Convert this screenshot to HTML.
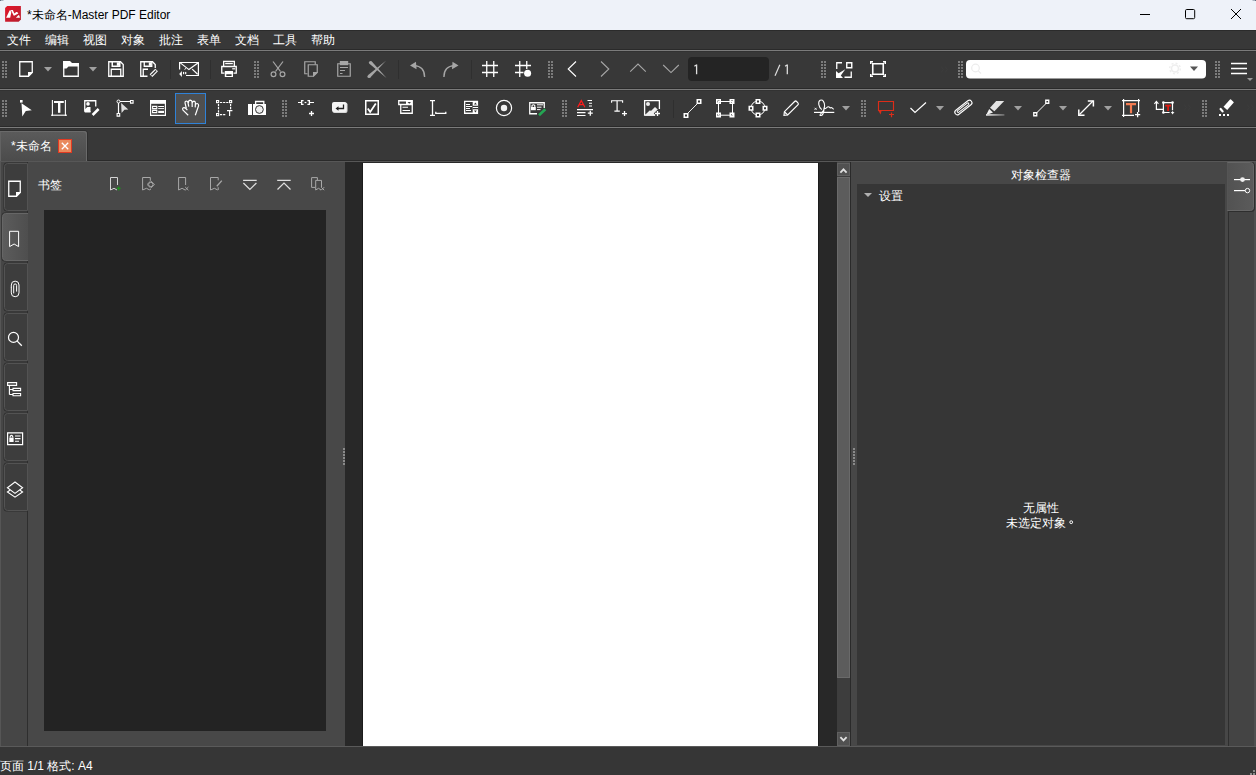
<!DOCTYPE html><html><head><meta charset="utf-8"><style>
html,body{margin:0;padding:0;width:1256px;height:775px;overflow:hidden;background:#363636;font-family:"Liberation Sans",sans-serif;}
</style></head><body><div style="position:absolute;left:0px;top:0px;width:1256px;height:30px;background:#eef2f9"></div><div style="position:absolute;left:0px;top:30px;width:1256px;height:1px;background:#2b2b2b"></div><div style="position:absolute;left:0px;top:31px;width:1256px;height:18px;background:#383838"></div><div style="position:absolute;left:0px;top:49px;width:1256px;height:1px;background:#2a2a2a"></div><div style="position:absolute;left:0px;top:50px;width:1256px;height:1px;background:#7b7b7b"></div><div style="position:absolute;left:0px;top:51px;width:1256px;height:1px;background:#323232"></div><div style="position:absolute;left:0px;top:88px;width:1256px;height:1px;background:#2a2a2a"></div><div style="position:absolute;left:0px;top:89px;width:1256px;height:1px;background:#7b7b7b"></div><div style="position:absolute;left:0px;top:90px;width:1256px;height:1px;background:#323232"></div><div style="position:absolute;left:0px;top:126px;width:1256px;height:1px;background:#2a2a2a"></div><div style="position:absolute;left:0px;top:127px;width:1256px;height:1px;background:#7b7b7b"></div><div style="position:absolute;left:0px;top:128px;width:1256px;height:1px;background:#323232"></div><div style="position:absolute;left:0px;top:52px;width:1256px;height:36px;background:#383838"></div><div style="position:absolute;left:0px;top:91px;width:1256px;height:35px;background:#383838"></div><div style="position:absolute;left:0px;top:129px;width:1256px;height:31px;background:#383838"></div><div style="position:absolute;left:0px;top:130px;width:88px;height:31px;background:#2e2e2e;border-radius:0 4px 0 0"></div><div style="position:absolute;left:0px;top:131px;width:87px;height:31px;background:linear-gradient(#5b5b5b,#4b4b4b);border-radius:0 3px 0 0;box-shadow:inset -1px 1px 0 #6a6a6a, inset 1px 0 0 #626262"></div><div style="position:absolute;left:88px;top:160px;width:1168px;height:1px;background:#2a2a2a"></div><div style="position:absolute;left:0px;top:161px;width:1256px;height:586px;background:#474747"></div><div style="position:absolute;left:0px;top:161px;width:27px;height:585px;background:#464646"></div><div style="position:absolute;left:0px;top:161px;width:1px;height:585px;background:#565656"></div><div style="position:absolute;left:27px;top:161px;width:1px;height:585px;background:#2e2e2e"></div><div style="position:absolute;left:28px;top:161px;width:317px;height:585px;background:#484848"></div><div style="position:absolute;left:44px;top:210px;width:282px;height:521px;background:#232323"></div><div style="position:absolute;left:345px;top:161px;width:492px;height:586px;background:#282828"></div><div style="position:absolute;left:362px;top:163px;width:1px;height:583px;background:#1c1c1c"></div><div style="position:absolute;left:363px;top:163px;width:455px;height:583px;background:#ffffff"></div><div style="position:absolute;left:818px;top:163px;width:1px;height:583px;background:#1c1c1c"></div><div style="position:absolute;left:837px;top:163px;width:13px;height:583px;background:#3d3d3d"></div><div style="position:absolute;left:850px;top:161px;width:1px;height:586px;background:#2a2a2a"></div><div style="position:absolute;left:851px;top:161px;width:377px;height:585px;background:#474747"></div><div style="position:absolute;left:857px;top:184px;width:368px;height:561px;background:#363636"></div><div style="position:absolute;left:1228px;top:161px;width:1px;height:585px;background:#2e2e2e"></div><div style="position:absolute;left:1229px;top:161px;width:27px;height:585px;background:#444444"></div><div style="position:absolute;left:1254px;top:161px;width:2px;height:585px;background:#4f4f4f"></div><div style="position:absolute;left:0px;top:161px;width:1256px;height:1px;background:#575757"></div><div style="position:absolute;left:0px;top:746px;width:1256px;height:1px;background:#5a5a5a"></div><div style="position:absolute;left:0px;top:747px;width:1256px;height:28px;background:#363636"></div><div style="position:absolute;left:27px;top:7px;font-size:12px;line-height:16px;color:#000;white-space:nowrap;">*未命名-Master PDF Editor</div><div style="position:absolute;left:7px;top:32px;font-size:12px;line-height:16px;color:#fff;white-space:nowrap;">文件</div><div style="position:absolute;left:45px;top:32px;font-size:12px;line-height:16px;color:#fff;white-space:nowrap;">编辑</div><div style="position:absolute;left:83px;top:32px;font-size:12px;line-height:16px;color:#fff;white-space:nowrap;">视图</div><div style="position:absolute;left:121px;top:32px;font-size:12px;line-height:16px;color:#fff;white-space:nowrap;">对象</div><div style="position:absolute;left:159px;top:32px;font-size:12px;line-height:16px;color:#fff;white-space:nowrap;">批注</div><div style="position:absolute;left:197px;top:32px;font-size:12px;line-height:16px;color:#fff;white-space:nowrap;">表单</div><div style="position:absolute;left:235px;top:32px;font-size:12px;line-height:16px;color:#fff;white-space:nowrap;">文档</div><div style="position:absolute;left:273px;top:32px;font-size:12px;line-height:16px;color:#fff;white-space:nowrap;">工具</div><div style="position:absolute;left:311px;top:32px;font-size:12px;line-height:16px;color:#fff;white-space:nowrap;">帮助</div><div style="position:absolute;left:11px;top:138px;font-size:12px;line-height:16px;color:#fff;white-space:nowrap;">*未命名</div><div style="position:absolute;left:38px;top:177px;font-size:12px;line-height:16px;color:#fff;white-space:nowrap;">书签</div><div style="position:absolute;left:1011px;top:167px;font-size:12px;line-height:16px;color:#fff;white-space:nowrap;">对象检查器</div><div style="position:absolute;left:879px;top:188px;font-size:12px;line-height:16px;color:#fff;white-space:nowrap;">设置</div><div style="position:absolute;left:1023px;top:500px;font-size:12px;line-height:16px;color:#fff;white-space:nowrap;">无属性</div><div style="position:absolute;left:1006px;top:515px;font-size:12px;line-height:16px;color:#fff;white-space:nowrap;">未选定对象</div><div style="position:absolute;left:0px;top:758px;font-size:12px;line-height:16px;color:#fff;white-space:nowrap;">页面 1/1 格式: A4</div><div style="position:absolute;left:688px;top:57px;width:81px;height:24px;background:#242424;border-radius:4px"></div><svg style="position:absolute;left:0;top:0" width="1256" height="775" viewBox="0 0 1256 775"><rect x="2" y="61" width="2" height="2" fill="#7c7c7c"/><rect x="5" y="61" width="2" height="2" fill="#7c7c7c"/><rect x="2" y="64" width="2" height="2" fill="#7c7c7c"/><rect x="5" y="64" width="2" height="2" fill="#7c7c7c"/><rect x="2" y="67" width="2" height="2" fill="#7c7c7c"/><rect x="5" y="67" width="2" height="2" fill="#7c7c7c"/><rect x="2" y="70" width="2" height="2" fill="#7c7c7c"/><rect x="5" y="70" width="2" height="2" fill="#7c7c7c"/><rect x="2" y="73" width="2" height="2" fill="#7c7c7c"/><rect x="5" y="73" width="2" height="2" fill="#7c7c7c"/><rect x="2" y="76" width="2" height="2" fill="#7c7c7c"/><rect x="5" y="76" width="2" height="2" fill="#7c7c7c"/><path d="M19.75,61.75 H32.25 V72.5 L28.5,76.25 H19.75 Z" stroke="#ffffff" stroke-width="1.3" fill="none" /><path d="M28,77 L28,72 L33,72 Z" fill="#ffffff"/><polygon points="44,67 52,67 48,71.5" fill="#a0a0a0"/><path d="M63.75,65.5 V76.25 H78.25 V65.5" stroke="#ffffff" stroke-width="1.3" fill="none" /><path d="M63,61 H70 L72,63 H79 V66.5 H68.5 L66.5,68.5 H63 Z" fill="#ffffff"/><polygon points="89,67 97,67 93,71.5" fill="#a0a0a0"/><path d="M108.75,61.75 H120.5 L123.25,64.5 V76.25 H108.75 Z" stroke="#ffffff" stroke-width="1.3" fill="none" /><path d="M112.25,61.75 V66.25 H119.75 V61.75" stroke="#ffffff" stroke-width="1.5" fill="none" /><rect x="116.8" y="62.3" width="2.2" height="3.5" fill="#ffffff"/><path d="M111.25,76.25 V69.25 H120.75 V76.25" stroke="#ffffff" stroke-width="1.3" fill="none" /><path d="M147.5,76.25 H140.75 V61.75 H152.5 L155.25,64.5 V68" stroke="#ffffff" stroke-width="1.3" fill="none" /><path d="M144.25,61.75 V66.25 H151.75 V61.75" stroke="#ffffff" stroke-width="1.3" fill="none" /><rect x="148.8" y="62.3" width="2.2" height="3.5" fill="#ffffff"/><path d="M143.25,76 V69.25 H148" stroke="#ffffff" stroke-width="1.3" fill="none" /><path d="M151,75.6 L156.6,70" stroke="#ffffff" stroke-width="3.8" fill="none" /><path d="M151.4,75.2 L156.2,70.4" stroke="#383838" stroke-width="1.4" fill="none" /><rect x="170" y="60" width="1" height="19" fill="#2f2f2f"/><path d="M179.6,69.6 V62.5 H198.4 V75.5 H186" stroke="#ffffff" stroke-width="1.2" fill="none" /><path d="M180.3,62.9 L188.9,69.6 L197.9,62.9" stroke="#ffffff" stroke-width="1.2" fill="none" /><path d="M184.5,69.4 L186,68.4" stroke="#ffffff" stroke-width="1.0" fill="none" /><path d="M192.2,69.1 L197.6,74.2" stroke="#ffffff" stroke-width="1.2" fill="none" /><path d="M179.2,73.9 L181.9,71.1 V76.9 Z" fill="#ffffff"/><rect x="183" y="71.9" width="1.2" height="2.3" fill="#ffffff"/><rect x="185.1" y="71.9" width="1.2" height="2.3" fill="#ffffff"/><rect x="210" y="60" width="1" height="19" fill="#2f2f2f"/><path d="M223.65,66 V61.45 H234.35 V66" stroke="#ffffff" stroke-width="1.3" fill="none" /><rect x="225.2" y="62.8" width="7.6" height="1.4" fill="#ffffff"/><path d="M224.5,73.2 H221.75 V66.5 H236.25 V73.2 H233.5" stroke="#ffffff" stroke-width="1.3" fill="none" /><rect x="232.2" y="68.2" width="3" height="1.2" fill="#ffffff"/><path d="M224.8,70.9 H233 V76.9 H224.8 Z M226.3,74.3 V75.9 H231.6 V74.3 Z" fill="#ffffff"/><rect x="254" y="61" width="2" height="2" fill="#7c7c7c"/><rect x="257" y="61" width="2" height="2" fill="#7c7c7c"/><rect x="254" y="64" width="2" height="2" fill="#7c7c7c"/><rect x="257" y="64" width="2" height="2" fill="#7c7c7c"/><rect x="254" y="67" width="2" height="2" fill="#7c7c7c"/><rect x="257" y="67" width="2" height="2" fill="#7c7c7c"/><rect x="254" y="70" width="2" height="2" fill="#7c7c7c"/><rect x="257" y="70" width="2" height="2" fill="#7c7c7c"/><rect x="254" y="73" width="2" height="2" fill="#7c7c7c"/><rect x="257" y="73" width="2" height="2" fill="#7c7c7c"/><rect x="254" y="76" width="2" height="2" fill="#7c7c7c"/><rect x="257" y="76" width="2" height="2" fill="#7c7c7c"/><path d="M273,61.5 L280.5,71.5" stroke="#a6a6a6" stroke-width="1.2" fill="none" /><path d="M283,61.5 L275.5,71.5" stroke="#a6a6a6" stroke-width="1.2" fill="none" /><circle cx="273.5" cy="74.3" r="2.4" stroke="#a6a6a6" stroke-width="1.2" fill="none"/><circle cx="282.5" cy="74.3" r="2.4" stroke="#a6a6a6" stroke-width="1.2" fill="none"/><path d="M307.5,73.75 H304.75 V61.75 H315.25 V64.5" stroke="#a6a6a6" stroke-width="1.2" fill="none" /><path d="M308.25,64.75 H317.25 V72.5 L313.5,76.25 H308.25 Z" stroke="#a6a6a6" stroke-width="1.2" fill="none" /><path d="M313,77 V72 H318 Z" fill="#a6a6a6"/><path d="M340,63.75 H337.75 V76.25 H350.25 V63.75 H348" stroke="#a6a6a6" stroke-width="1.2" fill="none" /><rect x="339.8" y="61" width="8.4" height="4.2" fill="#a6a6a6"/><path d="M340,67.5 H348 M340,70.5 H345 M340,73.5 H342.5" stroke="#a6a6a6" stroke-width="1.2" fill="none" /><path d="M367.9,75.3 L385.9,60.7 L370.1,77.7 Z" fill="#a6a6a6"/><circle cx="369" cy="76.5" r="1.6" fill="#a6a6a6"/><path d="M369.4,63.65 L386.5,77.9 L371.6,61.35 Z" fill="#a6a6a6"/><circle cx="370.5" cy="62.5" r="1.6" fill="#a6a6a6"/><rect x="398" y="60" width="1" height="19" fill="#2f2f2f"/><path d="M410,65.5 L416,61.8 L416.5,69.2 Z" fill="#a6a6a6"/><path d="M414,65.6 Q424.6,66 424.6,77" stroke="#a6a6a6" stroke-width="1.4" fill="none" /><path d="M458.5,65.5 L452.5,61.8 L452,69.2 Z" fill="#a6a6a6"/><path d="M454.5,65.6 Q443.9,66 443.9,77" stroke="#a6a6a6" stroke-width="1.4" fill="none" /><rect x="471" y="60" width="1" height="19" fill="#2f2f2f"/><path d="M486.75,61 V77 M493.75,61 V77 M482,65.5 H498 M482,72.5 H498" stroke="#ffffff" stroke-width="1.3" fill="none" /><path d="M519.75,61 V77 M515,65.5 H531 M515,72.5 H523.5 M526.75,61 V69" stroke="#ffffff" stroke-width="1.3" fill="none" /><circle cx="527.6" cy="73.3" r="3.5" fill="#ffffff"/><rect x="548" y="61" width="2" height="2" fill="#7c7c7c"/><rect x="551" y="61" width="2" height="2" fill="#7c7c7c"/><rect x="548" y="64" width="2" height="2" fill="#7c7c7c"/><rect x="551" y="64" width="2" height="2" fill="#7c7c7c"/><rect x="548" y="67" width="2" height="2" fill="#7c7c7c"/><rect x="551" y="67" width="2" height="2" fill="#7c7c7c"/><rect x="548" y="70" width="2" height="2" fill="#7c7c7c"/><rect x="551" y="70" width="2" height="2" fill="#7c7c7c"/><rect x="548" y="73" width="2" height="2" fill="#7c7c7c"/><rect x="551" y="73" width="2" height="2" fill="#7c7c7c"/><rect x="548" y="76" width="2" height="2" fill="#7c7c7c"/><rect x="551" y="76" width="2" height="2" fill="#7c7c7c"/><path d="M576,61.5 L568.2,69 L576,76.5" stroke="#ffffff" stroke-width="1.1" fill="none" /><path d="M601,61.5 L608.8,69 L601,76.5" stroke="#a6a6a6" stroke-width="1.1" fill="none" /><path d="M630.2,71.6 L638,64 L645.8,71.6" stroke="#a6a6a6" stroke-width="1.1" fill="none" /><path d="M663.2,65 L671,72.6 L678.8,65" stroke="#a6a6a6" stroke-width="1.1" fill="none" /><rect x="821" y="61" width="2" height="2" fill="#7c7c7c"/><rect x="824" y="61" width="2" height="2" fill="#7c7c7c"/><rect x="821" y="64" width="2" height="2" fill="#7c7c7c"/><rect x="824" y="64" width="2" height="2" fill="#7c7c7c"/><rect x="821" y="67" width="2" height="2" fill="#7c7c7c"/><rect x="824" y="67" width="2" height="2" fill="#7c7c7c"/><rect x="821" y="70" width="2" height="2" fill="#7c7c7c"/><rect x="824" y="70" width="2" height="2" fill="#7c7c7c"/><rect x="821" y="73" width="2" height="2" fill="#7c7c7c"/><rect x="824" y="73" width="2" height="2" fill="#7c7c7c"/><rect x="821" y="76" width="2" height="2" fill="#7c7c7c"/><rect x="824" y="76" width="2" height="2" fill="#7c7c7c"/><path d="M836.75,69 V62.75 H842" stroke="#ffffff" stroke-width="1.3" fill="none" /><path d="M846.75,62.75 H851.75 V67.75 H846.75 Z" stroke="#ffffff" stroke-width="1.4" fill="none" /><path d="M844.5,77.25 H851.25 V71.5" stroke="#ffffff" stroke-width="1.3" fill="none" /><path d="M836,71 V78 H843 L840.8,75.6 L845.3,69.3 L838.6,73.3 Z" fill="#ffffff"/><path d="M872.75,63.75 H883.25 V74.25 H872.75 Z" stroke="#ffffff" stroke-width="1.6" fill="none" /><path d="M870.75,64 V61.75 H873 M883,61.75 H885.25 V64 M885.25,74 V76.25 H883 M873,76.25 H870.75 V74" stroke="#ffffff" stroke-width="1.5" fill="none" /><path d="M941,66.5 L943.5,69.5 L941,72.5 M945,66.5 L947.5,69.5 L945,72.5" stroke="#3c3c3c" stroke-width="1" fill="none" /><rect x="958" y="61" width="2" height="2" fill="#7c7c7c"/><rect x="961" y="61" width="2" height="2" fill="#7c7c7c"/><rect x="958" y="64" width="2" height="2" fill="#7c7c7c"/><rect x="961" y="64" width="2" height="2" fill="#7c7c7c"/><rect x="958" y="67" width="2" height="2" fill="#7c7c7c"/><rect x="961" y="67" width="2" height="2" fill="#7c7c7c"/><rect x="958" y="70" width="2" height="2" fill="#7c7c7c"/><rect x="961" y="70" width="2" height="2" fill="#7c7c7c"/><rect x="958" y="73" width="2" height="2" fill="#7c7c7c"/><rect x="961" y="73" width="2" height="2" fill="#7c7c7c"/><rect x="958" y="76" width="2" height="2" fill="#7c7c7c"/><rect x="961" y="76" width="2" height="2" fill="#7c7c7c"/><rect x="966" y="60" width="240" height="18.4" rx="4" fill="#ffffff"/><circle cx="975.5" cy="68" r="3.8" stroke="#ececec" stroke-width="1.2" fill="none"/><path d="M978.3,70.8 L981,73.5" stroke="#ececec" stroke-width="1.2" fill="none" /><circle cx="1175" cy="68.5" r="3.5" stroke="#eeeeee" stroke-width="1.6" fill="none"/><circle cx="1175" cy="68.5" r="5.3" stroke="#eeeeee" stroke-width="1.4" stroke-dasharray="2 2.15" fill="none"/><polygon points="1190,66.5 1198,66.5 1194,71.0" fill="#555555"/><rect x="1215" y="61" width="2" height="2" fill="#7c7c7c"/><rect x="1218" y="61" width="2" height="2" fill="#7c7c7c"/><rect x="1215" y="64" width="2" height="2" fill="#7c7c7c"/><rect x="1218" y="64" width="2" height="2" fill="#7c7c7c"/><rect x="1215" y="67" width="2" height="2" fill="#7c7c7c"/><rect x="1218" y="67" width="2" height="2" fill="#7c7c7c"/><rect x="1215" y="70" width="2" height="2" fill="#7c7c7c"/><rect x="1218" y="70" width="2" height="2" fill="#7c7c7c"/><rect x="1215" y="73" width="2" height="2" fill="#7c7c7c"/><rect x="1218" y="73" width="2" height="2" fill="#7c7c7c"/><rect x="1215" y="76" width="2" height="2" fill="#7c7c7c"/><rect x="1218" y="76" width="2" height="2" fill="#7c7c7c"/><path d="M1231,63.5 H1247 M1231,68.5 H1247 M1231,73.5 H1247" stroke="#ffffff" stroke-width="1.3" fill="none" /><polygon points="1247,78 1253,78 1250,81" fill="#9a9a9a"/><rect x="2" y="100" width="2" height="2" fill="#7c7c7c"/><rect x="5" y="100" width="2" height="2" fill="#7c7c7c"/><rect x="2" y="103" width="2" height="2" fill="#7c7c7c"/><rect x="5" y="103" width="2" height="2" fill="#7c7c7c"/><rect x="2" y="106" width="2" height="2" fill="#7c7c7c"/><rect x="5" y="106" width="2" height="2" fill="#7c7c7c"/><rect x="2" y="109" width="2" height="2" fill="#7c7c7c"/><rect x="5" y="109" width="2" height="2" fill="#7c7c7c"/><rect x="2" y="112" width="2" height="2" fill="#7c7c7c"/><rect x="5" y="112" width="2" height="2" fill="#7c7c7c"/><rect x="2" y="115" width="2" height="2" fill="#7c7c7c"/><rect x="5" y="115" width="2" height="2" fill="#7c7c7c"/><rect x="20" y="100" width="2.6" height="2.6" fill="#ffffff"/><path d="M21.5,103.2 L31.8,110.3 L25.8,111 L22.3,116.6 Z" fill="#ffffff"/><path d="M52.4,100 V116 M65.4,100 V116" stroke="#ffffff" stroke-width="1.1" fill="none" /><path d="M51,115.2 H67" stroke="#ffffff" stroke-width="1.1" fill="none" /><rect x="54" y="101" width="9.8" height="2" fill="#ffffff"/><rect x="58" y="103" width="2.4" height="9.8" fill="#ffffff"/><path d="M84.75,111.75 V100.75 H95.75 V106.5" stroke="#ffffff" stroke-width="1.3" fill="none" /><path d="M84.75,111.75 H90.5" stroke="#ffffff" stroke-width="1.5" fill="none" /><circle cx="88" cy="103.9" r="1.8" fill="#fff"/><path d="M85,112 V109.2 L87.3,107 H90.5 V112 Z" fill="#ffffff"/><path d="M92.6,115 L98.6,109" stroke="#ffffff" stroke-width="2.6" fill="none" /><path d="M118.5,103 V113.5 M120,101.5 H130.3" stroke="#ffffff" stroke-width="1.2" fill="none" /><circle cx="118.5" cy="101.5" r="1.5" stroke="#fff" stroke-width="1" fill="#383838"/><path d="M130.5,100.5 h2.6 v2.6 h-2.6 Z" stroke="#ffffff" stroke-width="1.1" fill="#383838" /><path d="M117.1,113.5 h2.6 v2.6 h-2.6 Z" stroke="#ffffff" stroke-width="1.1" fill="#383838" /><path d="M121.1,103.1 L128.3,109.4 L124.4,109.8 L121.6,113 Z" fill="#e0e0e0"/><path d="M150.6,100.6 H165.4 V115.4 H150.6 Z" stroke="#ffffff" stroke-width="1.2" fill="none" /><rect x="150" y="100" width="16" height="3.8" fill="#ffffff"/><path d="M152.6,106.4 h4.2 v2.2 h-4.2 Z M152.6,110.4 h4.2 v2.2 h-4.2 Z" stroke="#ffffff" stroke-width="1.1" fill="none" /><path d="M158.2,106.5 H164 M158.2,108.6 H164" stroke="#ffffff" stroke-width="1.0" fill="none" /><rect x="158.2" y="110.8" width="5.8" height="2.2" fill="#ffffff"/><rect x="175.5" y="93.5" width="30" height="30" fill="#4f4f4f" stroke="#2f82d8" stroke-width="1"/><path d="M188.2,115.2 L183,110.2 Q182,108.8 183.2,107.8 Q184.4,107.2 185.6,108.4 L187.4,110.2 M186.4,108.6 L185,103 Q184.8,101.2 186.3,101 Q187.6,101 188,102.6 L188.8,106.6 M188.3,103 Q188.5,100.2 190.4,100.2 Q192,100.3 192.1,102.4 L192.2,107 M192.2,103.2 Q192.6,101.2 194,101.2 Q195.4,101.4 195.4,103 L195.2,107.4 M195.4,105 Q195.8,103.4 197.2,103.5 Q198.8,103.8 198.6,105.6 L195.3,115.2" stroke="#ffffff" stroke-width="1.2" fill="none" /><rect x="216" y="100" width="3.2" height="3.2" fill="#ffffff"/><rect x="217.1" y="101.1" width="1" height="1" fill="#383838"/><rect x="229" y="100" width="3.2" height="3.2" fill="#ffffff"/><rect x="230.1" y="101.1" width="1" height="1" fill="#383838"/><rect x="216" y="113" width="3.2" height="3.2" fill="#ffffff"/><rect x="217.1" y="114.1" width="1" height="1" fill="#383838"/><path d="M220,102.5 H228.6 M218.5,104 V112.4 M230.6,104 V109.2 M220,114.6 H225.4" stroke="#ffffff" stroke-width="1.2" fill="none" stroke-dasharray="2.2 0.9"/><path d="M227,110.6 H232.4 M229.6,110.6 V116" stroke="#ffffff" stroke-width="1.2" fill="none" /><rect x="248" y="104" width="4" height="11" fill="#ffffff"/><path d="M253,104 H266 V115 H253 Z" fill="#ffffff"/><circle cx="259.4" cy="109.5" r="3.9" stroke="#333" stroke-width="1" fill="#eeeeee"/><path d="M255.6,104 V101.5 H263.8 V104" stroke="#ffffff" stroke-width="1.3" fill="none" /><rect x="282" y="100" width="2" height="2" fill="#7c7c7c"/><rect x="285" y="100" width="2" height="2" fill="#7c7c7c"/><rect x="282" y="103" width="2" height="2" fill="#7c7c7c"/><rect x="285" y="103" width="2" height="2" fill="#7c7c7c"/><rect x="282" y="106" width="2" height="2" fill="#7c7c7c"/><rect x="285" y="106" width="2" height="2" fill="#7c7c7c"/><rect x="282" y="109" width="2" height="2" fill="#7c7c7c"/><rect x="285" y="109" width="2" height="2" fill="#7c7c7c"/><rect x="282" y="112" width="2" height="2" fill="#7c7c7c"/><rect x="285" y="112" width="2" height="2" fill="#7c7c7c"/><rect x="282" y="115" width="2" height="2" fill="#7c7c7c"/><rect x="285" y="115" width="2" height="2" fill="#7c7c7c"/><path d="M298,102.5 H301.2 M309.6,102.5 H314" stroke="#ffffff" stroke-width="1.2" fill="none" /><path d="M303.6,100.7 H301.6 V104.3 H303.6 M307.4,100.7 H309.4 V104.3 H307.4" stroke="#ffffff" stroke-width="1.3" fill="none" /><path d="M304.6,102.5 H306.4" stroke="#ffffff" stroke-width="1.2" fill="none" /><path d="M309.0,113.5 H314.0 M311.5,111.0 V116.0" stroke="#ffffff" stroke-width="1.3" fill="none" /><rect x="332.5" y="102.5" width="15" height="10.5" rx="2" fill="#d9d9d9"/><rect x="332" y="102" width="14.5" height="10" rx="2" fill="#f4f4f4"/><path d="M343.5,104.5 V108.5 H337.8" stroke="#222" stroke-width="1.3" fill="none" /><path d="M335.5,108.5 L338.5,106.3 V110.7 Z" fill="#222"/><path d="M365.75,100.75 H378.25 V114.25 H365.75 Z" stroke="#ffffff" stroke-width="1.5" fill="none" /><path d="M367.8,108.4 L370.2,112 L375.8,103.6" stroke="#ffffff" stroke-width="1.8" fill="none" /><path d="M398.75,100.75 H412.25 V104.5 H398.75 Z" stroke="#ffffff" stroke-width="1.3" fill="none" /><rect x="406" y="101" width="6.3" height="3.5" fill="#ffffff"/><path d="M407.5,102 H411 L409.25,103.8 Z" fill="#383838"/><path d="M400.75,104.5 V113.25 H412.25 V104.5" stroke="#ffffff" stroke-width="1.3" fill="none" /><path d="M402.5,107.2 H408 M402.5,110.5 H410" stroke="#ffffff" stroke-width="1.1" fill="none" /><path d="M432.5,100.5 V115.5 M430,100.6 H435 M430,115.4 H435" stroke="#ffffff" stroke-width="1.3" fill="none" /><path d="M435.8,111.8 V113.3 H445.8 V111.8" stroke="#ffffff" stroke-width="1.3" fill="none" /><path d="M464,100.8 H478.1 V113.9 H464 Z M465.3,102.1 V112.6 H472.7 V102.1 Z" fill="#ffffff"/><path d="M472.7,105.8 H478.1 V107.1 H472.7 Z M472.7,108.1 H478.1 V109.2 H472.7 Z" fill="#383838"/><path d="M474,104.6 L475.4,102.6 L476.8,104.6 Z M474,110.6 L475.4,112.4 L476.8,110.6 Z" fill="#333"/><path d="M466,104.5 H470 M466,106.5 H472 M466,108.5 H470 M466,110.5 H471" stroke="#ffffff" stroke-width="1.0" fill="none" /><circle cx="504" cy="108" r="7.6" stroke="#fff" stroke-width="1.2" fill="none"/><circle cx="504" cy="108" r="3.2" fill="#f2f2f2"/><path d="M537,113.75 H529.75 V102.75 H544.25 V108" stroke="#ffffff" stroke-width="1.3" fill="none" /><path d="M531,107 H535.8 V110.2 H531 Z" fill="#ffffff"/><path d="M532,107 V105.6 Q533.4,103.8 534.8,105.6 V107" stroke="#ffffff" stroke-width="1.1" fill="none" /><path d="M537,104.8 H543 M537,107.2 H541.5 M537,109.6 H540.5" stroke="#ffffff" stroke-width="1.0" fill="none" /><path d="M539,115.2 L545.3,109.2" stroke="#24a553" stroke-width="2.6" fill="none" /><rect x="562" y="100" width="2" height="2" fill="#7c7c7c"/><rect x="565" y="100" width="2" height="2" fill="#7c7c7c"/><rect x="562" y="103" width="2" height="2" fill="#7c7c7c"/><rect x="565" y="103" width="2" height="2" fill="#7c7c7c"/><rect x="562" y="106" width="2" height="2" fill="#7c7c7c"/><rect x="565" y="106" width="2" height="2" fill="#7c7c7c"/><rect x="562" y="109" width="2" height="2" fill="#7c7c7c"/><rect x="565" y="109" width="2" height="2" fill="#7c7c7c"/><rect x="562" y="112" width="2" height="2" fill="#7c7c7c"/><rect x="565" y="112" width="2" height="2" fill="#7c7c7c"/><rect x="562" y="115" width="2" height="2" fill="#7c7c7c"/><rect x="565" y="115" width="2" height="2" fill="#7c7c7c"/><path d="M577.7,107.2 L581.3,100.6 L584.9,107.2 M579,104.7 H583.6" stroke="#ff1a1a" stroke-width="1.2" fill="none" /><path d="M587.5,100.5 H592 M589,103.3 H592 M589,106 H592" stroke="#ffffff" stroke-width="1.1" fill="none" /><path d="M577,109.6 H593 M577,112.6 H585.5 M577,115.5 H585.5" stroke="#ffffff" stroke-width="1.2" fill="none" /><path d="M587.8,113.2 H592.8 M590.3,110.7 V115.7" stroke="#ffffff" stroke-width="1.3" fill="none" /><path d="M611.6,102.8 V100.8 H622.6 V102.8" stroke="#ffffff" stroke-width="1.1" fill="none" /><path d="M617.1,100.8 V111.2 M614.4,111.2 H619.8" stroke="#ffffff" stroke-width="1.2" fill="none" /><path d="M622.0,113.6 H627.0 M624.5,111.1 V116.1" stroke="#ffffff" stroke-width="1.3" fill="none" /><path d="M659.4,109 V100.6 H644.6 V115.2 H655" stroke="#ffffff" stroke-width="1.3" fill="none" /><circle cx="648" cy="103.9" r="2" fill="#eee"/><path d="M645.2,114.8 L649.6,110.4 L651.2,110.7 L655,107 L657.8,109.6 L653.8,113.2 L655.5,115.8 H645 Z" fill="#eeeeee"/><path d="M655.0,113.5 H660.0 M657.5,111.0 V116.0" stroke="#ffffff" stroke-width="1.3" fill="none" /><rect x="673" y="100" width="1" height="18" fill="#2f2f2f"/><path d="M684.25,113.75 h3.5 v3.5 h-3.5 Z M697.25,99.75 h3.5 v3.5 h-3.5 Z" stroke="#ffffff" stroke-width="1.5" fill="none" /><path d="M687.5,113.5 L697.5,103.5" stroke="#ffffff" stroke-width="0.9" fill="none" /><path d="M718.5,101.5 V115 M732.5,101.5 V115 M718,101.5 H733 M718,115.2 H733" stroke="#ffffff" stroke-width="1.0" fill="none" /><path d="M716.75,99.75 h3.5 v3.5 h-3.5 Z" stroke="#ffffff" stroke-width="1.5" fill="none" /><path d="M730.25,99.75 h3.5 v3.5 h-3.5 Z" stroke="#ffffff" stroke-width="1.5" fill="none" /><path d="M716.75,113.25 h3.5 v3.5 h-3.5 Z" stroke="#ffffff" stroke-width="1.5" fill="none" /><path d="M730.25,113.25 h3.5 v3.5 h-3.5 Z" stroke="#ffffff" stroke-width="1.5" fill="none" /><circle cx="758" cy="108" r="7" stroke="#fff" stroke-width="1" fill="none"/><path d="M756.25,99.75 h3.5 v3.5 h-3.5 Z" stroke="#ffffff" stroke-width="1.5" fill="#383838" /><path d="M756.25,113.25 h3.5 v3.5 h-3.5 Z" stroke="#ffffff" stroke-width="1.5" fill="#383838" /><path d="M749.25,106.5 h3.5 v3.5 h-3.5 Z" stroke="#ffffff" stroke-width="1.5" fill="#383838" /><path d="M763.25,106.5 h3.5 v3.5 h-3.5 Z" stroke="#ffffff" stroke-width="1.5" fill="#383838" /><path d="M784,115.3 L784.4,111.7 L794.6,101.5 Q795.6,100.5 796.6,101.5 L797.9,102.8 Q798.9,103.8 797.9,104.8 L787.7,115 Z" stroke="#ffffff" stroke-width="1.2" fill="none" /><path d="M784.4,111.7 L787.7,115 M785.5,114 L786.3,113.2" stroke="#ffffff" stroke-width="1.1" fill="none" /><path d="M814,112.4 H834.3" stroke="#ffffff" stroke-width="1.2" fill="none" /><path d="M814.6,107.8 L816.6,109.8 M816.6,107.8 L814.6,109.8" stroke="#ffffff" stroke-width="0.9" fill="none" /><path d="M821.8,109.6 C818.6,107.4 817.6,101.6 820.2,100.3 C822.7,99.2 824.8,102.2 824.6,106 C824.4,109.6 822.8,112 821.4,113.2 C819.8,114.6 819.4,115.8 821.2,115.5 C823.2,115.1 823.8,112.6 824,108.6 C825.6,109.6 826.8,106.6 828.4,106.8 C829.8,107 830.2,108.5 831,107.7 C831.8,107 832.4,108.8 833.8,109.3" stroke="#ffffff" stroke-width="1.1" fill="none" /><polygon points="842,106 850,106 846,110.5" fill="#a0a0a0"/><rect x="861" y="100" width="2" height="2" fill="#7c7c7c"/><rect x="864" y="100" width="2" height="2" fill="#7c7c7c"/><rect x="861" y="103" width="2" height="2" fill="#7c7c7c"/><rect x="864" y="103" width="2" height="2" fill="#7c7c7c"/><rect x="861" y="106" width="2" height="2" fill="#7c7c7c"/><rect x="864" y="106" width="2" height="2" fill="#7c7c7c"/><rect x="861" y="109" width="2" height="2" fill="#7c7c7c"/><rect x="864" y="109" width="2" height="2" fill="#7c7c7c"/><rect x="861" y="112" width="2" height="2" fill="#7c7c7c"/><rect x="864" y="112" width="2" height="2" fill="#7c7c7c"/><rect x="861" y="115" width="2" height="2" fill="#7c7c7c"/><rect x="864" y="115" width="2" height="2" fill="#7c7c7c"/><path d="M878.5,101.5 H893.5 V110.5 H878.5 Z" stroke="#dd2c18" stroke-width="1.15" fill="none" /><path d="M878.2,110.6 H881.6 L880.6,114.6 Z" fill="#dd2c18"/><path d="M889,114.5 H894 M891.5,112.4 V117.2" stroke="#dd2c18" stroke-width="1.2" fill="none" /><path d="M910.5,108 L915,112.5 L926,102.5" stroke="#ffffff" stroke-width="1.2" fill="none" /><polygon points="936,106 944,106 940,110.5" fill="#a0a0a0"/><path d="M957.4,112.2 L969.4,102.8" stroke="#ffffff" stroke-width="6.2" fill="none" stroke-linecap="round"/><path d="M957.4,112.2 L969.4,102.8" stroke="#383838" stroke-width="4.0" fill="none" stroke-linecap="round"/><path d="M958.3,111.4 L967.8,104" stroke="#ffffff" stroke-width="3.1" fill="none" stroke-linecap="round"/><path d="M958.3,111.4 L967.8,104" stroke="#383838" stroke-width="1.1" fill="none" stroke-linecap="round"/><path d="M990,107.7 L996.2,101 H1004.2 L994.4,111.3 Z" fill="#e4e4e4"/><path d="M989.2,108.9 L993,112.6 L986.2,115 Z" fill="#f2f2f2"/><rect x="986" y="114" width="18.4" height="1.8" fill="url(#hlg)"/><polygon points="1014,106 1022,106 1018,110.5" fill="#a0a0a0"/><path d="M1033.75,112.75 h3 v3 h-3 Z M1045.75,100.25 h3 v3 h-3 Z" stroke="#ffffff" stroke-width="1.3" fill="none" /><path d="M1036.5,113 L1046,103.5" stroke="#ffffff" stroke-width="1.0" fill="none" /><polygon points="1059,106 1067,106 1063,110.5" fill="#a0a0a0"/><path d="M1079.5,114.5 L1093,101" stroke="#ffffff" stroke-width="1.2" fill="none" /><path d="M1087.8,100.9 H1093.4 V106.5 M1078.8,109.5 V115.3 H1084.5" stroke="#ffffff" stroke-width="1.5" fill="none" /><polygon points="1104,106 1112,106 1108,110.5" fill="#a0a0a0"/><path d="M1123.6,99 V117 M1138.6,99 V112 M1122,100.6 H1140 M1122,115.4 H1134" stroke="#ffffff" stroke-width="1.2" fill="none" /><path d="M1135.0,114.6 H1140.1999999999998 M1137.6,112.0 V117.19999999999999" stroke="#ffffff" stroke-width="1.3" fill="none" /><path d="M1126,103 H1136 V105.2 H1132.1 V113.2 H1129.9 V105.2 H1126 Z" fill="#f47c52"/><path d="M1156.4,102 V109.4 H1163" stroke="#ffffff" stroke-width="1.2" fill="none" /><path d="M1154.4,103.8 L1156.4,101.4 L1158.4,103.8" stroke="#ffffff" stroke-width="1.1" fill="none" /><path d="M1163.4,102.6 V112.5 M1172.5,102.6 V110.2 M1163.4,102.6 H1172.5 M1163.4,112.5 H1169.6" stroke="#ffffff" stroke-width="1.2" fill="none" /><circle cx="1163.4" cy="102.6" r="1.3" fill="#fff"/><circle cx="1172.5" cy="102.6" r="1.3" fill="#fff"/><circle cx="1163.4" cy="112.5" r="1.3" fill="#fff"/><path d="M1172.6,111 L1173.4,112.1 L1174.5,112.7 L1173.4,113.3 L1172.6,114.4 L1171.8,113.3 L1170.7,112.7 L1171.8,112.1 Z" fill="#ffffff"/><path d="M1165.2,104.8 H1171 V106.6 H1169 V111 H1167.2 V106.6 H1165.2 Z" fill="#e31a10"/><path d="M1184,104.5 L1186.5,107.5 L1184,110.5 M1188,104.5 L1190.5,107.5 L1188,110.5" stroke="#3c3c3c" stroke-width="1" fill="none" /><rect x="1202" y="100" width="2" height="2" fill="#7c7c7c"/><rect x="1205" y="100" width="2" height="2" fill="#7c7c7c"/><rect x="1202" y="103" width="2" height="2" fill="#7c7c7c"/><rect x="1205" y="103" width="2" height="2" fill="#7c7c7c"/><rect x="1202" y="106" width="2" height="2" fill="#7c7c7c"/><rect x="1205" y="106" width="2" height="2" fill="#7c7c7c"/><rect x="1202" y="109" width="2" height="2" fill="#7c7c7c"/><rect x="1205" y="109" width="2" height="2" fill="#7c7c7c"/><rect x="1202" y="112" width="2" height="2" fill="#7c7c7c"/><rect x="1205" y="112" width="2" height="2" fill="#7c7c7c"/><rect x="1202" y="115" width="2" height="2" fill="#7c7c7c"/><rect x="1205" y="115" width="2" height="2" fill="#7c7c7c"/><path d="M1223.5,106.8 L1230,99.4 Q1230.5,98.9 1231,99.4 L1233.6,101.9 Q1234,102.4 1233.6,102.8 L1227.2,110 Z" fill="#ffffff"/><path d="M1220.6,109 L1222.6,111.4" stroke="#ffffff" stroke-width="2.2" fill="none" stroke-linecap="round"/><rect x="1219" y="114" width="2" height="2" fill="#ffffff"/><rect x="1223" y="114" width="2" height="2" fill="#ffffff"/><rect x="1227" y="114" width="2" height="2" fill="#ffffff"/><path d="M1247,104.5 L1249.5,107.5 L1247,110.5 M1251,104.5 L1253.5,107.5 L1251,110.5" stroke="#3c3c3c" stroke-width="1" fill="none" /><defs><linearGradient id="hlg"><stop offset="0" stop-color="#ddd"/><stop offset="1" stop-color="#666"/></linearGradient></defs><defs><linearGradient id="lg" x1="0" y1="0" x2="1" y2="1"><stop offset="0" stop-color="#e2162a"/><stop offset="1" stop-color="#b71f2f"/></linearGradient></defs><path d="M7.2,5.9 H20.9 V19.6 L18.7,21.8 H5.1 V8 Z" fill="url(#lg)"/><path d="M6.1,17.8 L9.6,10.4 L10.4,10.1 L11.3,12.4 L10.2,17.8 Z M10.8,10.1 H12.8 L14.4,13.6 L16.2,12.1 Q17,11.8 17.8,12.6 L18.3,13.4 L14.6,15.6 L13.8,15.8 Z M15.9,17.8 L18.3,15.2 Q18.9,14.9 19.3,15.6 L20,17.8 Z" fill="#ffffff"/><path d="M1140,14.5 H1150" stroke="#000" stroke-width="1" fill="none" /><rect x="1185.5" y="9.5" width="9.2" height="9.2" rx="1.2" stroke="#000" stroke-width="1" fill="none"/><path d="M1231,9 L1241,19 M1241,9 L1231,19" stroke="#000" stroke-width="1" fill="none" /><rect x="58.5" y="139.5" width="13" height="13" fill="#e98a5c" stroke="#e23a22" stroke-width="1"/><path d="M61.8,142.8 L68.2,149.2 M68.2,142.8 L61.8,149.2" stroke="#fff" stroke-width="1.3" fill="none" /><path d="M28,162.5 H7 Q3.5,162.5 3.5,166 V208 Q3.5,211.5 7,211.5 H28" fill="#2c2c2c"/><path d="M27.5,163.5 H7.5 Q4.5,163.5 4.5,166.5 V207.5 Q4.5,210.5 7.5,210.5 H27.5 Z" fill="#3d3d3d" stroke="#535353" stroke-width="1"/><path d="M28,212.5 H5 Q1.5,212.5 1.5,216 V258 Q1.5,261.5 5,261.5 H28" fill="#2c2c2c"/><path d="M28,213.5 H5.5 Q2.5,213.5 2.5,216.5 V257.5 Q2.5,260.5 5.5,260.5 H28" fill="url(#tabg)" stroke="#666666" stroke-width="1"/><path d="M28,262.5 H7 Q3.5,262.5 3.5,266 V308 Q3.5,311.5 7,311.5 H28" fill="#2c2c2c"/><path d="M27.5,263.5 H7.5 Q4.5,263.5 4.5,266.5 V307.5 Q4.5,310.5 7.5,310.5 H27.5 Z" fill="#3d3d3d" stroke="#535353" stroke-width="1"/><path d="M28,312.5 H7 Q3.5,312.5 3.5,316 V358 Q3.5,361.5 7,361.5 H28" fill="#2c2c2c"/><path d="M27.5,313.5 H7.5 Q4.5,313.5 4.5,316.5 V357.5 Q4.5,360.5 7.5,360.5 H27.5 Z" fill="#3d3d3d" stroke="#535353" stroke-width="1"/><path d="M28,362.5 H7 Q3.5,362.5 3.5,366 V408 Q3.5,411.5 7,411.5 H28" fill="#2c2c2c"/><path d="M27.5,363.5 H7.5 Q4.5,363.5 4.5,366.5 V407.5 Q4.5,410.5 7.5,410.5 H27.5 Z" fill="#3d3d3d" stroke="#535353" stroke-width="1"/><path d="M28,412.5 H7 Q3.5,412.5 3.5,416 V458 Q3.5,461.5 7,461.5 H28" fill="#2c2c2c"/><path d="M27.5,413.5 H7.5 Q4.5,413.5 4.5,416.5 V457.5 Q4.5,460.5 7.5,460.5 H27.5 Z" fill="#3d3d3d" stroke="#535353" stroke-width="1"/><path d="M28,462.5 H7 Q3.5,462.5 3.5,466 V508 Q3.5,511.5 7,511.5 H28" fill="#2c2c2c"/><path d="M27.5,463.5 H7.5 Q4.5,463.5 4.5,466.5 V507.5 Q4.5,510.5 7.5,510.5 H27.5 Z" fill="#3d3d3d" stroke="#535353" stroke-width="1"/><defs><linearGradient id="tabg" x1="0" x2="1"><stop offset="0" stop-color="#5c5c5c"/><stop offset="1" stop-color="#4e4e4e"/></linearGradient></defs><path d="M8.75,181.25 H20.25 V192.5 L16.5,196.25 H8.75 Z" stroke="#ffffff" stroke-width="1.3" fill="none" /><path d="M16,197 V192 H21 Z" fill="#ffffff"/><path d="M9.6,246.6 V231.3 H18.6 V246.6 L14.1,244 Z" stroke="#ffffff" stroke-width="1.0" fill="none" /><path d="M11.3,288 V285 A3.85,3.85 0 0 1 19,285 V292.9 A3.85,3.85 0 0 1 11.3,292.9 V287.5" stroke="#ffffff" stroke-width="1.0" fill="none" /><path d="M13.7,293.4 V285.4 A1.45,1.45 0 0 1 16.6,285.4 V291.6" stroke="#ffffff" stroke-width="1.0" fill="none" /><circle cx="13.5" cy="337.4" r="5" stroke="#fff" stroke-width="1.2" fill="none"/><path d="M17.2,341.1 L21.8,345.7" stroke="#ffffff" stroke-width="1.3" fill="none" /><path d="M7.6,382.6 H16.6 V385.4 H7.6 Z M13,388.4 H20.6 V390.6 H13 Z M13,393.5 H20.6 V395.7 H13 Z" stroke="#ffffff" stroke-width="1.1" fill="none" /><path d="M9.4,385.5 V394.5 M9.4,389.5 H13 M9.4,394.5 H13" stroke="#ffffff" stroke-width="1.1" fill="none" /><path d="M7.6,432.9 H22.6 V444.6 H7.6 Z" stroke="#ffffff" stroke-width="1.2" fill="none" /><path d="M9.3,437.6 H13.6 V442 H9.3 Z" fill="#ffffff"/><path d="M10.2,437.6 V436.4 Q11.45,434.4 12.7,436.4 V437.6" stroke="#ffffff" stroke-width="1.1" fill="none" /><path d="M15,436 H20.5 M15,438.6 H20.5 M15,441.2 H19" stroke="#ffffff" stroke-width="1.1" fill="none" /><path d="M15,482 L22.6,487.7 L15,493.4 L7.4,487.7 Z" stroke="#ffffff" stroke-width="1.1" fill="none" /><path d="M10.2,490 L7.4,492 L15,497.2 L22.6,492 L19.8,490" stroke="#ffffff" stroke-width="1.1" fill="none" /><path d="M110.5,190 V177.5 H117.5 V185 M110.5,190 L114.0,188.3 L117.0,190" stroke="#d4d4d4" stroke-width="1.0" fill="none" /><path d="M116.6,188.4 H120.6 M118.6,186.4 V190.4" stroke="#1f8f1f" stroke-width="1.3" fill="none" /><path d="M142.6,190 V177.5 H150.3 V180.5 M142.6,190 L146.45,188.3 L149.8,190" stroke="#a8a8a8" stroke-width="1.0" fill="none" /><path d="M150.3,190 V189" stroke="#a8a8a8" stroke-width="1.0" fill="none" /><circle cx="150.8" cy="184.5" r="2.2" stroke="#a8a8a8" stroke-width="1" fill="none"/><path d="M147,184.5 L150.8,180.8 L154.6,184.5 L150.8,188.2 Z" stroke="#a8a8a8" stroke-width="0.8" fill="none" /><path d="M178.6,190 V177.5 H185.6 V185 M178.6,190 L182.1,188.3 L185.1,190" stroke="#a8a8a8" stroke-width="1.0" fill="none" /><path d="M185.2,187 L188.4,190.2 M188.4,187 L185.2,190.2" stroke="#a8a8a8" stroke-width="1.0" fill="none" /><path d="M210.5,190 V177.5 H218.2 V180.3 M210.5,190 L214.35,188.3 L217.7,190" stroke="#a8a8a8" stroke-width="1.0" fill="none" /><path d="M218.2,187.3 V190" stroke="#a8a8a8" stroke-width="1.0" fill="none" /><path d="M216.8,186.2 L221.8,180.6" stroke="#a8a8a8" stroke-width="1.3" fill="none" /><path d="M243.1,180.4 H256.7 M243.4,183 L249.9,189.5 L256.4,183" stroke="#dedede" stroke-width="1.2" fill="none" /><path d="M277.2,180.4 H290.7 M277.5,189.5 L284,183 L290.5,189.5" stroke="#dedede" stroke-width="1.2" fill="none" /><path d="M311.6,187.4 V177.6 H317.4 V180 M311.6,187.4 H315" stroke="#a8a8a8" stroke-width="1.0" fill="none" /><path d="M315.7,190 V180.4 H321.5 V187 M315.7,190 L318.6,188.3 L321.0,190" stroke="#a8a8a8" stroke-width="1.0" fill="none" /><path d="M321.2,187.2 L324.2,190.2 M324.2,187.2 L321.2,190.2" stroke="#a8a8a8" stroke-width="1.0" fill="none" /><rect x="343" y="448" width="2" height="2" fill="#8a8a8a"/><rect x="853" y="448" width="2" height="2" fill="#8a8a8a"/><rect x="343" y="451" width="2" height="2" fill="#8a8a8a"/><rect x="853" y="451" width="2" height="2" fill="#8a8a8a"/><rect x="343" y="454" width="2" height="2" fill="#8a8a8a"/><rect x="853" y="454" width="2" height="2" fill="#8a8a8a"/><rect x="343" y="457" width="2" height="2" fill="#8a8a8a"/><rect x="853" y="457" width="2" height="2" fill="#8a8a8a"/><rect x="343" y="460" width="2" height="2" fill="#8a8a8a"/><rect x="853" y="460" width="2" height="2" fill="#8a8a8a"/><rect x="343" y="463" width="2" height="2" fill="#8a8a8a"/><rect x="853" y="463" width="2" height="2" fill="#8a8a8a"/><rect x="837.5" y="163.5" width="12" height="12" fill="#515151" stroke="#606060" stroke-width="1"/><path d="M840.4,172.6 L843.5,169.4 L846.6,172.6" stroke="#e0e0e0" stroke-width="1.8" fill="none" /><rect x="837.5" y="177.5" width="12" height="500" fill="#5c5c5c" stroke="#6a6a6a" stroke-width="1"/><rect x="837.5" y="732.5" width="12" height="13" fill="#515151" stroke="#606060" stroke-width="1"/><path d="M840.4,737.2 L843.5,740.4 L846.6,737.2" stroke="#e0e0e0" stroke-width="1.8" fill="none" /><path d="M1228,162 H1251 Q1255,162 1255,166 V208 Q1255,212 1251,212 H1228 Z" fill="#2e2e2e"/><path d="M1227.5,162.5 H1250.5 Q1253.5,162.5 1253.5,165.5 V207.5 Q1253.5,210.5 1250.5,210.5 H1227.5 Z" fill="url(#rtg)" stroke="#676767" stroke-width="1"/><defs><linearGradient id="rtg" x1="0" x2="1"><stop offset="0" stop-color="#525252"/><stop offset="1" stop-color="#5b5b5b"/></linearGradient></defs><rect x="1227" y="163" width="1" height="47" fill="#555555"/><path d="M1234,179.6 H1250" stroke="#ffffff" stroke-width="1.2" fill="none" /><circle cx="1242.5" cy="179.6" r="2.4" fill="#f0f0f0"/><path d="M1234,190.6 H1245.2" stroke="#ffffff" stroke-width="1.2" fill="none" /><circle cx="1247.5" cy="190.6" r="2.2" stroke="#fff" stroke-width="1" fill="#575757"/><path d="M864,193 H872 L868,197 Z" fill="#b0b0b0"/><rect x="1253" y="770" width="2" height="2" fill="#8a8a8a"/><rect x="1250" y="773" width="2" height="2" fill="#8a8a8a"/><rect x="1253" y="773" width="2" height="2" fill="#8a8a8a"/><circle cx="1071.2" cy="522.2" r="1.4" stroke="#fff" stroke-width="1" fill="none"/><path d="M696.6,64.6 V74.2 M696.7,64.8 L694.4,66.3" stroke="#dedede" stroke-width="1.3" fill="none" /><path d="M775,75.8 L779.8,64.8" stroke="#dedede" stroke-width="1.2" fill="none" /><path d="M787.3,64.6 V74.2 M787.4,64.8 L785.1,66.3" stroke="#dedede" stroke-width="1.3" fill="none" /><rect x="0" y="0" width="1.5" height="1" fill="#5f6e7e"/><rect x="1.5" y="0" width="2" height="1" fill="#aab4c0"/><rect x="1254.5" y="0" width="1.5" height="1" fill="#5f6e7e"/><rect x="1252.5" y="0" width="2" height="1" fill="#aab4c0"/></svg></body></html>
